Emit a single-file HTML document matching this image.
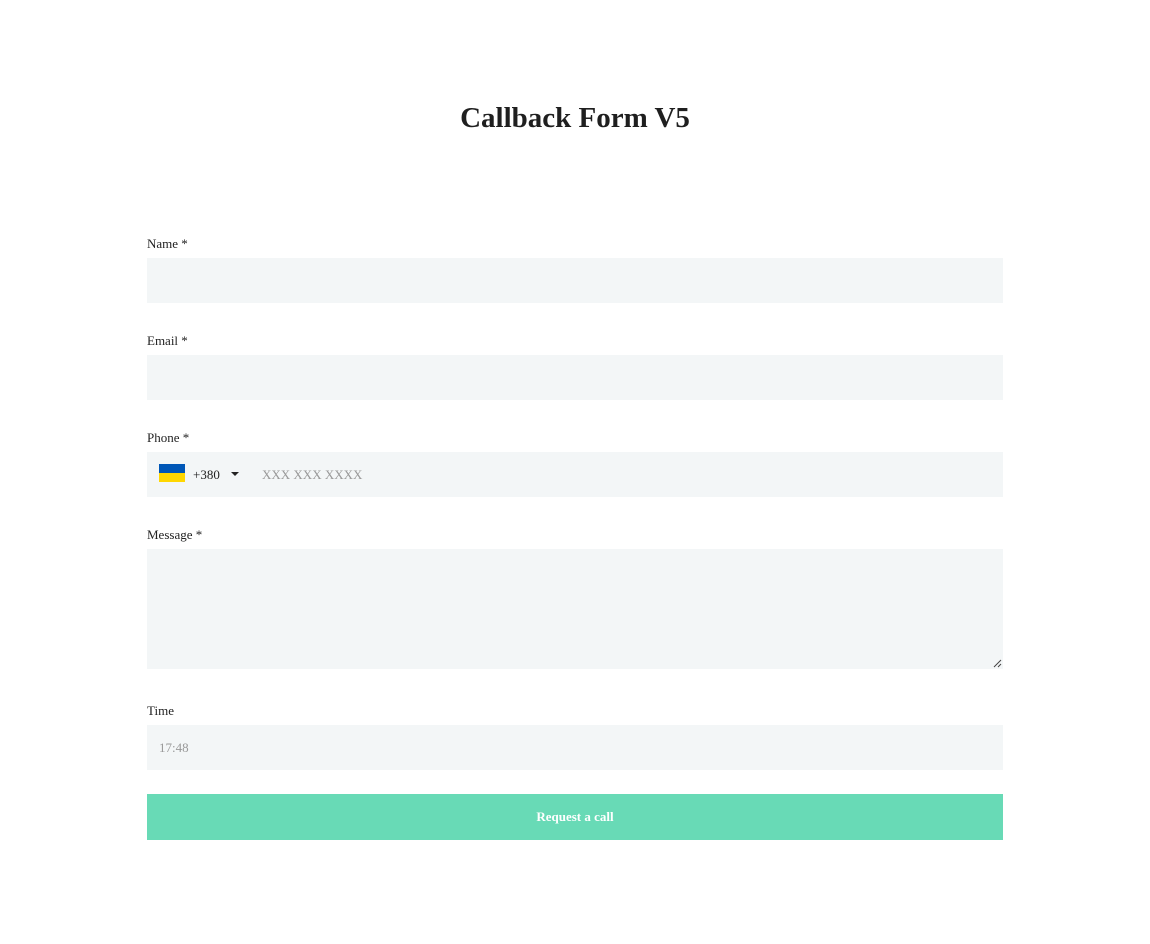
<!DOCTYPE html>
<html><head><meta charset="utf-8"><style>
body{margin:0;background:#fff;font-family:"Liberation Serif",serif;color:#222;}
h1{position:absolute;left:0;width:1150px;top:98px;margin:0;text-align:center;font-size:29px;font-weight:bold;line-height:40px;color:#1f1f1f;}
.l{position:absolute;left:147px;font-size:13px;color:#222;}
.f{position:absolute;left:147px;width:856px;background:#f3f6f7;}
.ph{color:#999;font-size:14px;position:absolute;}
.btn{position:absolute;left:147px;top:794px;width:856px;height:46px;background:#68dab6;color:#fff;font-weight:bold;font-size:13px;text-align:center;line-height:46px;}
</style></head><body>
<h1>Callback Form V5</h1>
<div class="l" style="top:236px">Name *</div>
<div class="f" style="top:258px;height:45px"></div>
<div class="l" style="top:333px">Email *</div>
<div class="f" style="top:355px;height:45px"></div>
<div class="l" style="top:430px">Phone *</div>
<div class="f" style="top:452px;height:45px">
 <div style="position:absolute;left:12px;top:12px;width:26px;height:9px;background:#0057b7"></div>
 <div style="position:absolute;left:12px;top:21px;width:26px;height:9px;background:#ffd700"></div>
 <div style="position:absolute;left:46px;top:15px;font-size:13px;color:#222">+380</div>
 <div style="position:absolute;left:84px;top:20px;width:0;height:0;border-left:4px solid transparent;border-right:4px solid transparent;border-top:4px solid #222"></div>
 <div class="ph" style="left:115px;top:15px;font-size:13px">XXX XXX XXXX</div>
</div>
<div class="l" style="top:527px">Message *</div>
<div class="f" style="top:549px;height:120px">
 <svg style="position:absolute;right:1px;bottom:1px" width="9" height="9"><path d="M8 1L1 8M8 5L5 8" stroke="#444" stroke-width="1"/></svg>
</div>
<div class="l" style="top:703px">Time</div>
<div class="f" style="top:725px;height:45px"><div class="ph" style="left:12px;top:15px;font-size:13px">17:48</div></div>
<div class="btn">Request a call</div>
</body></html>
